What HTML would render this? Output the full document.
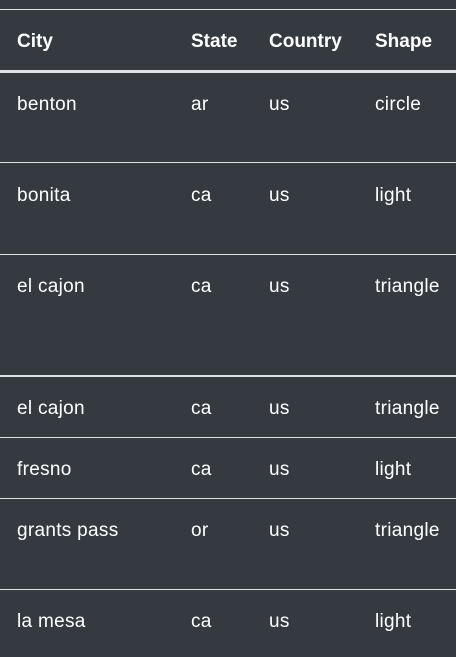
<!DOCTYPE html>
<html><head><style>
body{margin:0;width:456px;height:657px;background:#343a40;position:relative;overflow:hidden;font-family:"Liberation Sans",sans-serif;color:#fff;font-size:19px;letter-spacing:0.3px}
.l{position:absolute;left:0;width:456px;background:#dee2e6}
.t{position:absolute;line-height:22px;white-space:nowrap}
.h{font-weight:bold;letter-spacing:0}
</style></head><body>
<div class="l" style="top:9px;height:1px"></div>
<div class="l" style="top:70px;height:3px"></div>
<div class="l" style="top:162px;height:1px"></div>
<div class="l" style="top:254px;height:1px"></div>
<div class="l" style="top:375px;height:2px"></div>
<div class="l" style="top:437px;height:1px"></div>
<div class="l" style="top:498px;height:1px"></div>
<div class="l" style="top:589px;height:1px"></div>

<div class="t h" style="top:31px;left:17px">City</div>
<div class="t h" style="top:31px;left:191px">State</div>
<div class="t h" style="top:31px;left:269px">Country</div>
<div class="t h" style="top:31px;left:375px">Shape</div>

<div class="t" style="top:94px;left:17px">benton</div><div class="t" style="top:94px;left:191px">ar</div><div class="t" style="top:94px;left:269px">us</div><div class="t" style="top:94px;left:375px">circle</div>
<div class="t" style="top:185px;left:17px">bonita</div><div class="t" style="top:185px;left:191px">ca</div><div class="t" style="top:185px;left:269px">us</div><div class="t" style="top:185px;left:375px">light</div>
<div class="t" style="top:276px;left:17px">el cajon</div><div class="t" style="top:276px;left:191px">ca</div><div class="t" style="top:276px;left:269px">us</div><div class="t" style="top:276px;left:375px">triangle</div>
<div class="t" style="top:398px;left:17px">el cajon</div><div class="t" style="top:398px;left:191px">ca</div><div class="t" style="top:398px;left:269px">us</div><div class="t" style="top:398px;left:375px">triangle</div>
<div class="t" style="top:459px;left:17px">fresno</div><div class="t" style="top:459px;left:191px">ca</div><div class="t" style="top:459px;left:269px">us</div><div class="t" style="top:459px;left:375px">light</div>
<div class="t" style="top:520px;left:17px">grants pass</div><div class="t" style="top:520px;left:191px">or</div><div class="t" style="top:520px;left:269px">us</div><div class="t" style="top:520px;left:375px">triangle</div>
<div class="t" style="top:611px;left:17px">la mesa</div><div class="t" style="top:611px;left:191px">ca</div><div class="t" style="top:611px;left:269px">us</div><div class="t" style="top:611px;left:375px">light</div>
</body></html>
